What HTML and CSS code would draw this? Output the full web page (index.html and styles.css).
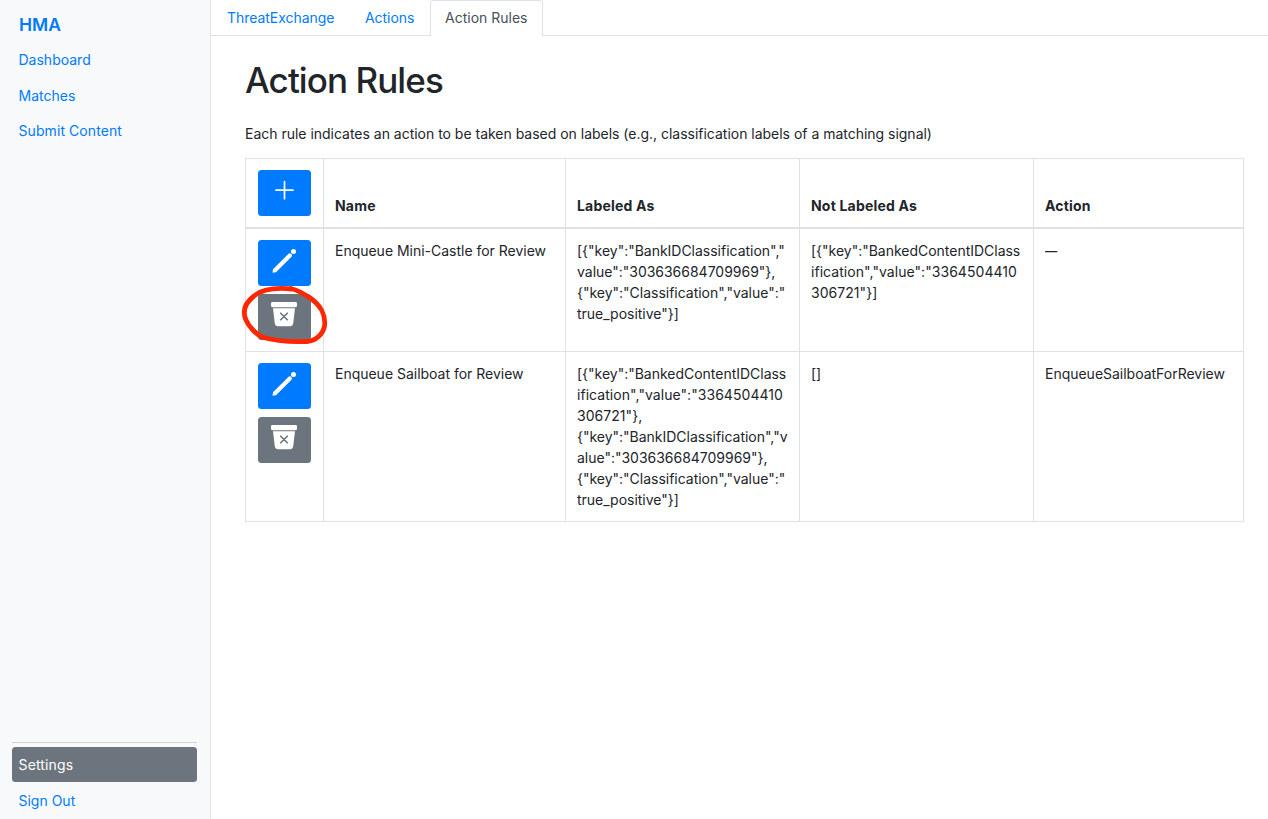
FILE: index.html
```html
<!DOCTYPE html>
<html lang="en">
<head>
<meta charset="utf-8">
<title>HMA - Action Rules</title>
<link rel="stylesheet" href="styles.css">
</head>
<body>
<svg class="defs" aria-hidden="true">
  <symbol id="pencil" viewBox="0 0 26 26"><path d="M4 22.300 18.800 7.500" stroke="currentColor" stroke-width="4.200" stroke-linecap="round"/><path d="m1.400 24.800 1-4.200 3.200 3.200Z" fill="currentColor"/><circle cx="22.500" cy="3.500" r="2.500" fill="currentColor"/></symbol>
  <symbol id="archive" viewBox="0 0 26 26"><rect width="26" height="5.2" rx="1.4" fill="currentColor"/><path d="M2 6.3h22l-1.8 15.300a3 3 0 0 1-3 2.600H6.800a3 3 0 0 1-3-2.600Z" fill="currentColor"/><path class="cross" d="m9.700 11.200 6.600 6.600m0-6.600-6.600 6.600"/></symbol>
</svg>
<div class="app">
  <nav class="sidebar">
    <a class="brand">HMA</a>
    <a class="link dashboard">Dashboard</a>
    <a class="link matches">Matches</a>
    <a class="link submit">Submit Content</a>
    <div class="bottom">
      <a class="link settings">Settings</a>
      <a class="link signout">Sign Out</a>
    </div>
  </nav>
  <main class="main">
    <div class="tabs">
      <a class="tab tab-te">ThreatExchange</a>
      <a class="tab tab-actions">Actions</a>
      <a class="tab active">Action Rules</a>
    </div>
    <section class="content">
      <h1>Action Rules</h1>
      <p class="intro">Each rule indicates an action to be taken based on labels (e.g., classification labels of a matching signal)</p>
      <table class="rules">
        <colgroup><col class="c-buttons"><col class="c-name"><col class="c-labels"><col class="c-labels"><col class="c-action"></colgroup>
        <thead>
          <tr>
            <th class="buttons"><button class="btn primary"><svg class="plus" viewBox="0 0 20 20"><path d="M10.500 1.700v17M2 10.200h17" stroke="currentColor" stroke-width="1.700" stroke-linecap="round"/></svg></button></th>
            <th>Name</th><th>Labeled As</th><th>Not Labeled As</th><th>Action</th>
          </tr>
        </thead>
        <tbody>
          <tr class="castle">
            <td class="buttons">
              <button class="btn primary"><svg class="icon"><use href="#pencil"/></svg></button>
              <button class="btn secondary"><svg class="icon archive"><use href="#archive"/></svg></button>
              <svg class="mark" viewBox="0 0 90 64"><path d="M51 5C36 3.500 22 4.500 13 12C4 19 1 27 5 36C8 43 15 50 21 53C34 57 53 58 66 57.500C75 57 82 50 83.500 42C85 31 79 21 70 14.500C64 10.500 56 6 50 4.500"/></svg>
            </td>
            <td>Enqueue Mini-Castle for Review</td>
            <td>[{"key":"BankIDClassification","<br>value":"303636684709969"},<br>{"key":"Classification","value":"<br>true_positive"}]</td>
            <td>[{"key":"BankedContentIDClass<br><span class="digits">ification","value":"3364504410</span><br><span class="digits">306721"}]</span></td>
            <td><span class="dash">—</span></td>
          </tr>
          <tr class="sailboat">
            <td class="buttons">
              <button class="btn primary"><svg class="icon"><use href="#pencil"/></svg></button>
              <button class="btn secondary"><svg class="icon archive"><use href="#archive"/></svg></button>
            </td>
            <td>Enqueue Sailboat for Review</td>
            <td>[{"key":"BankedContentIDClass<br><span class="digits">ification","value":"3364504410</span><br><span class="digits">306721"},</span><br>{"key":"BankIDClassification","v<br>alue":"303636684709969"},<br>{"key":"Classification","value":"<br>true_positive"}]</td>
            <td>[]</td>
            <td>EnqueueSailboatForReview</td>
          </tr>
        </tbody>
      </table>
    </section>
  </main>
</div>
</body>
</html>
```

FILE: styles.css
```css
* { box-sizing: border-box; }
body {
  margin: 0;
  font: 14px/21px Inter, "Liberation Sans", sans-serif;
  color: #212529;
  background: #fff;
}
.defs { display: none; }
.app { display: flex; height: 819px; overflow: hidden; }
.sidebar {
  display: flex;
  flex-direction: column;
  flex: 0 0 211px;
  padding: 12px 13px 1px 12px;
  background: #f8f9fa;
  border-right: 1px solid #e3e6e9;
}
.brand { padding-left: 7px; font-size: 17.5px; line-height: 26px; font-weight: 600; color: #007bff; }
.link { height: 35px; margin-bottom: 0.5px; padding: 7px 6.5px; color: #007bff; border-radius: 3.5px; }
.dashboard { margin-top: 4px; }
.submit { letter-spacing: 0.08px; }
.settings { letter-spacing: 0.15px; }
.bottom { display: flex; flex-direction: column; margin-top: auto; padding-top: 4px; border-top: 1px solid #ced2d6; }
.link.settings { margin-bottom: 1px; background: #6c757d; color: #fff; }
.main { flex: 1; min-width: 0; }
.tabs { display: flex; height: 36px; border-bottom: 1px solid #dee2e6; }
.tab { height: 36px; padding: 7px 15px 8px 16px; color: #007bff; white-space: nowrap; letter-spacing: -0.04px; }
.tab-te { width: 139px; }
.tab-actions { width: 80px; padding-left: 15px; }
.tab.active {
  width: 113px;
  padding: 6px 0 0 14px;
  color: #495057;
  letter-spacing: 0;
  background: #fff;
  border: 1px solid #dee2e6;
  border-bottom: 0;
  border-radius: 3.5px 3.5px 0 0;
}
.content { padding: 23px 24px 0 34px; }
h1 { margin: 0; font-size: 35px; line-height: 42px; font-weight: 500; letter-spacing: -0.93px; }
.intro { margin: 22px 0 14px; white-space: nowrap; letter-spacing: -0.015px; }
.rules {
  width: 999px;
  table-layout: fixed;
  border-collapse: separate;
  border-spacing: 0;
  border-top: 1px solid #dee2e6;
  border-left: 1px solid #dee2e6;
}
.c-buttons { width: 78px; }
.c-name { width: 242px; }
.c-labels { width: 234px; }
.c-action { width: 210px; }
th, td {
  padding: 11px 0 0 11px;
  border-right: 1px solid #dee2e6;
  border-bottom: 1px solid #dee2e6;
  text-align: left;
  vertical-align: top;
  white-space: nowrap;
  letter-spacing: -0.015px;
}
th { height: 70px; padding-bottom: 11px; border-bottom-width: 2px; font-weight: 650; letter-spacing: 0.2px; vertical-align: bottom; }
.castle { height: 123px; }
.sailboat { height: 170px; }
.buttons { position: relative; padding: 11px 12px 0; vertical-align: top; }
.digits { letter-spacing: 0.05px; }
.btn {
  display: flex;
  justify-content: center;
  align-items: flex-start;
  width: 53px;
  height: 46px;
  padding: 8px 0 0;
  border: 0;
  border-radius: 3.5px;
  color: #fff;
}
.btn + .btn { margin-top: 8px; }
.primary { background: #007bff; }
.secondary { background: #6c757d; }
.plus { width: 20px; height: 20px; margin-top: 2px; margin-right: 1px; fill: none; }
.icon { width: 26px; height: 26px; margin-right: 1px; }
.cross { fill: none; stroke: #6c757d; stroke-width: 1.6; stroke-linecap: round; }
.mark { position: absolute; left: -5px; top: 55px; width: 90px; height: 64px; }
.mark path { fill: none; stroke: #ff2600; stroke-width: 4.8; stroke-linecap: round; stroke-linejoin: round; }
.dash { display: inline-block; transform: scaleX(0.87); transform-origin: left; }
```
